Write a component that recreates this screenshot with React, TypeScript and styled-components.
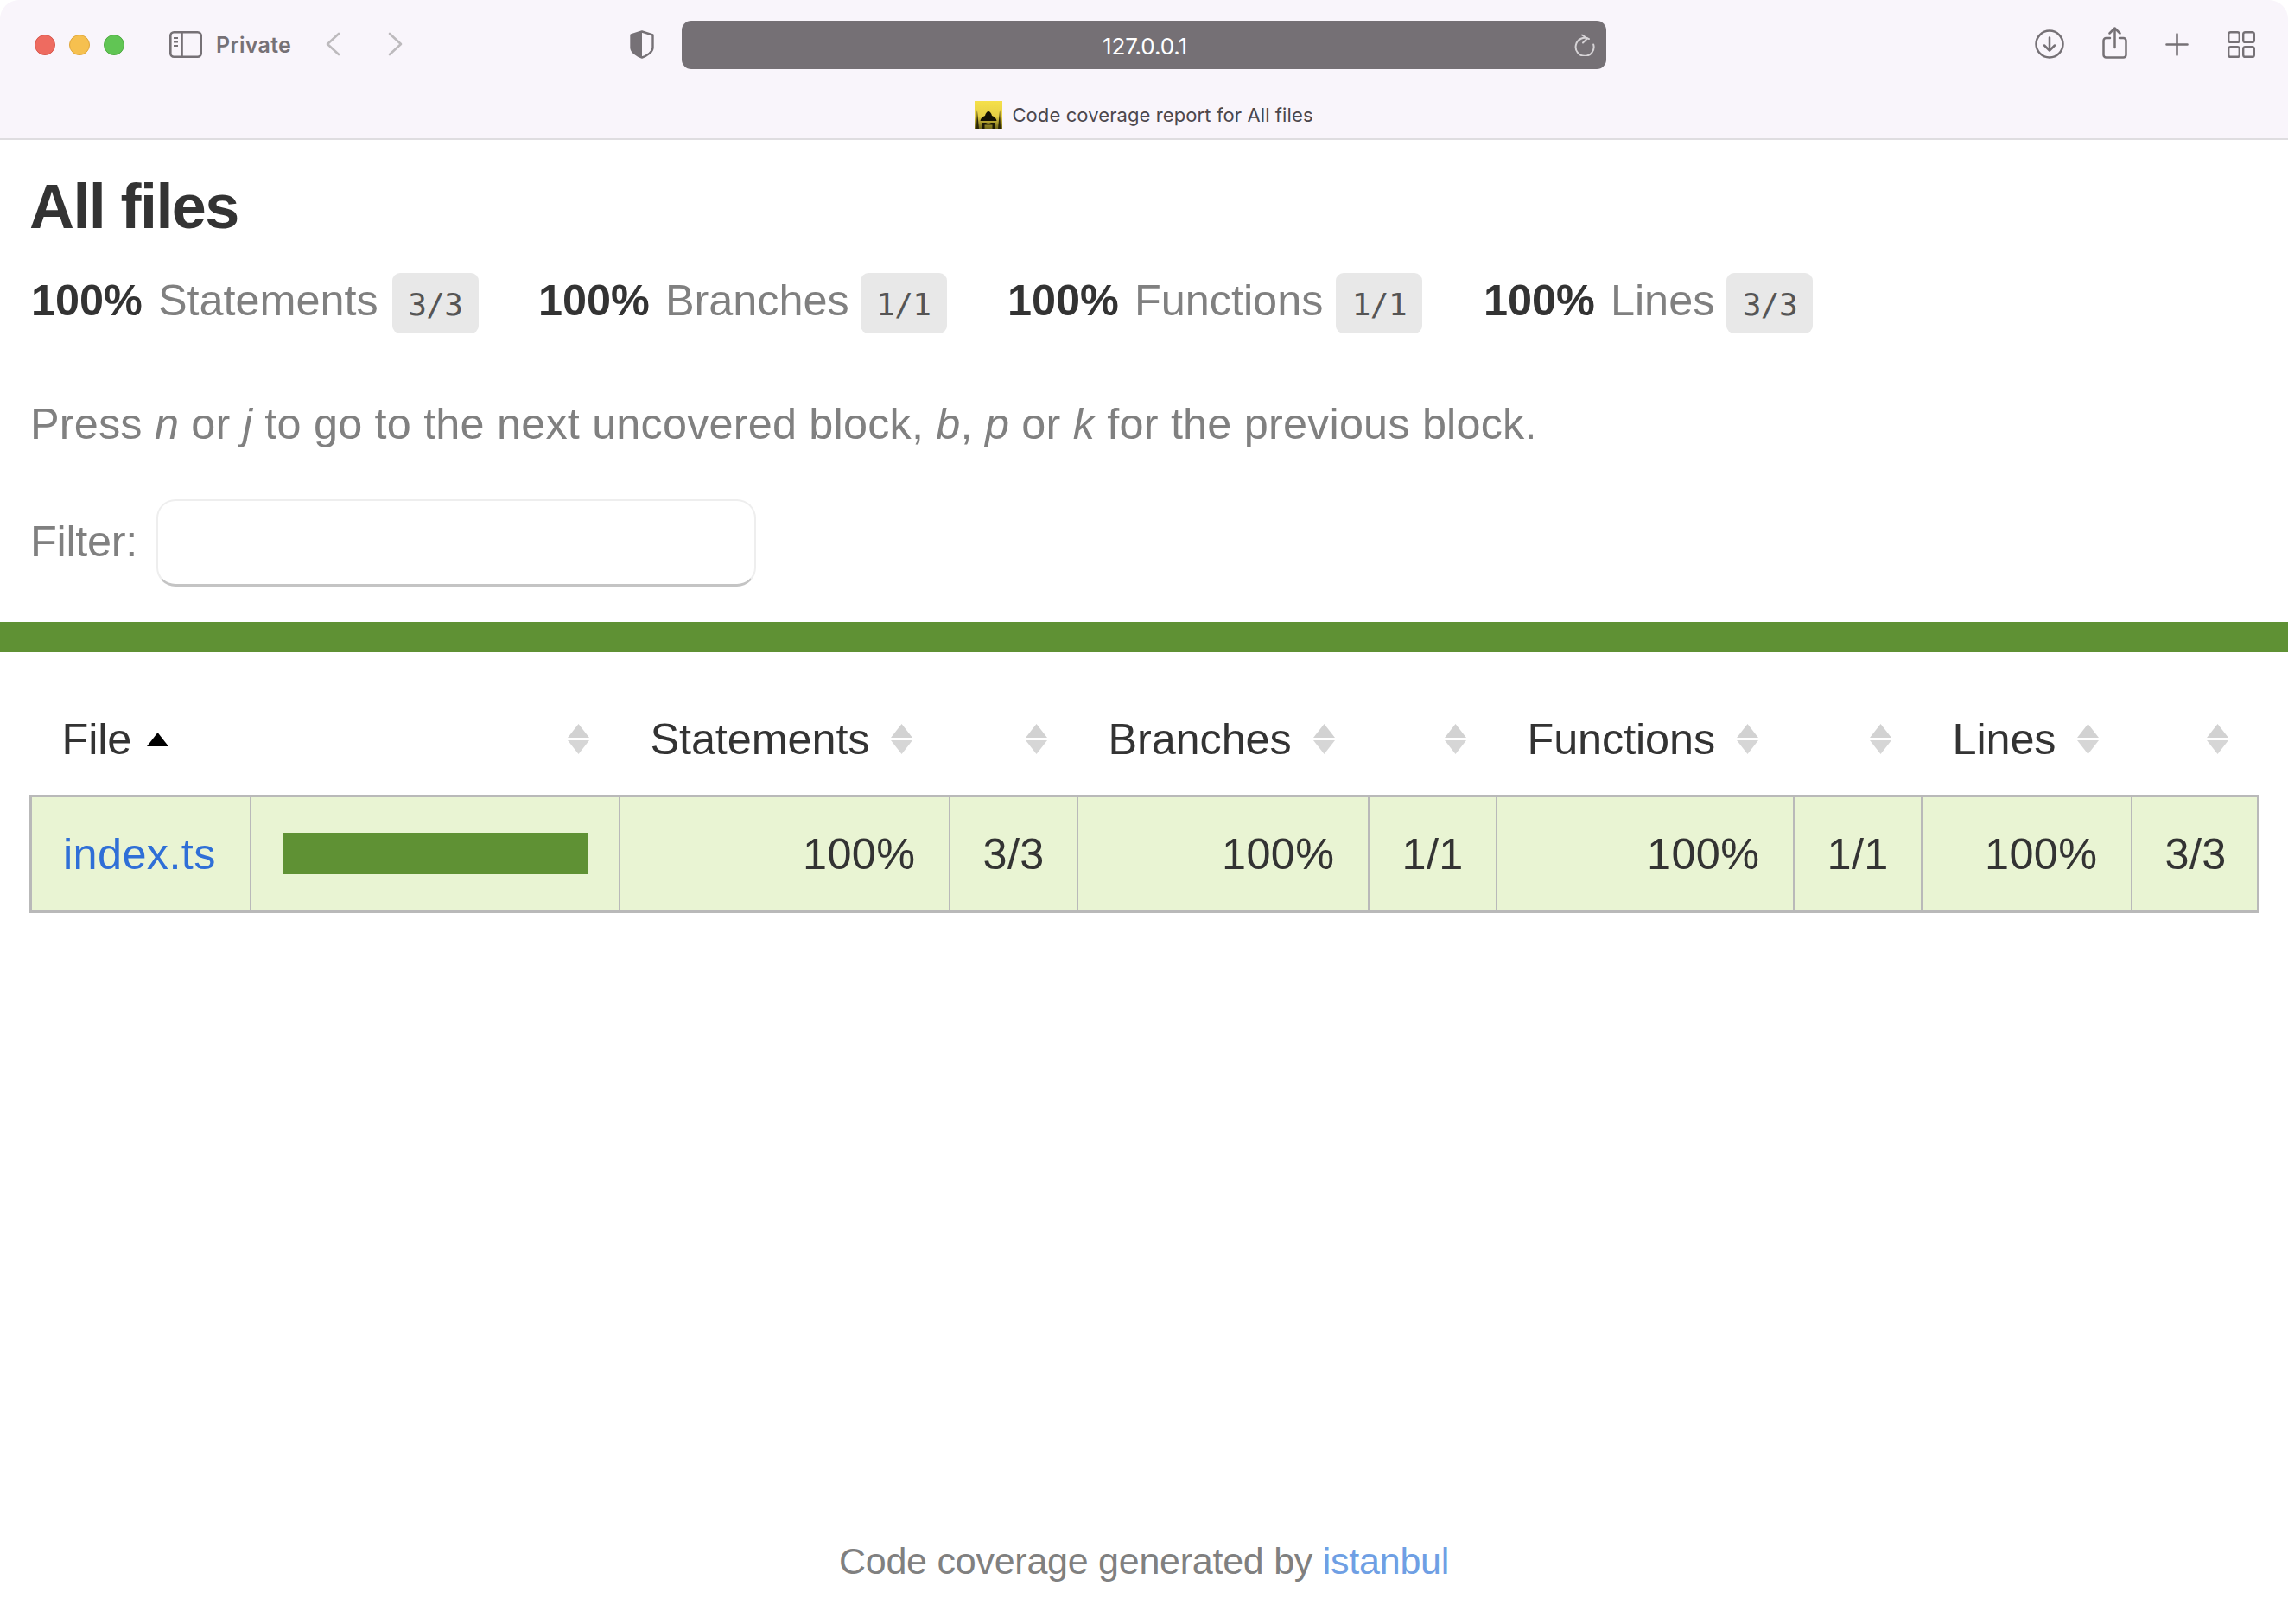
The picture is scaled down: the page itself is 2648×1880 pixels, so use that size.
import React from "react";
import styled, { createGlobalStyle } from "styled-components";

const Global = createGlobalStyle`
  html, body { margin: 0; padding: 0; background: #fff; }
  body { font-family: "Liberation Sans", Arial, sans-serif; color: #333; overflow: hidden; }
`;
const Page = styled.div`
  width: 2648px; height: 1880px; display: flex; flex-direction: column; background: #fff;
`;
const Chrome = styled.header`
  height: 160px; box-sizing: content-box; background: #f9f5fb;
  border-bottom: 2px solid #dfdde0; border-radius: 22px 22px 0 0;
  display: flex; flex-direction: column; flex: none;
`;
const Toolbar = styled.div`
  display: flex; align-items: center; height: 56px; margin-top: 24px; padding-left: 40px;
`;
const Lights = styled.div`display: flex; gap: 16px;`;
const Light = styled.span<{ $bg: string; $edge: string }>`
  width: 24px; height: 24px; border-radius: 50%; box-sizing: border-box;
  background: ${p => p.$bg}; border: 1px solid ${p => p.$edge};
`;
const Slot = styled.span<{ $ml: number; $w: number; $h: number; $mt?: number }>`
  display: flex; flex: none; margin-left: ${p => p.$ml}px; margin-top: ${p => p.$mt ?? -2}px;
  width: ${p => p.$w}px; height: ${p => p.$h}px;
  svg { display: block; width: 100%; height: 100%; }
`;
const Private = styled.span`
  margin-left: 16px; width: 87px; flex: none; font: 600 25px "Inter", sans-serif; color: #767176; letter-spacing: 0.3px;
  white-space: nowrap;
`;
const UrlBar = styled.div`
  margin-left: 32px; width: 1070px; height: 56px; flex: none; border-radius: 11px; background: #757075;
  display: flex; align-items: center; justify-content: center; position: relative;
`;
const UrlText = styled.span`
  font: 400 26px "Inter", sans-serif; color: #fff; letter-spacing: -0.1px; padding-top: 3px; margin-left: 2px;
`;
const Reload = styled.span`
  position: absolute; right: 12px; top: 15px; width: 26px; height: 26px;
  svg { display: block; width: 100%; height: 100%; }
`;
const TabRow = styled.div`
  display: flex; align-items: center; justify-content: center; gap: 11px; height: 32px; margin-top: 37px;
`;
const TabTitle = styled.span`
  font: 400 22px "Inter", sans-serif; color: #4c474d; letter-spacing: 0.1px; white-space: nowrap;
`;
const Body = styled.main`padding: 0 34px; flex: none;`;
const Title = styled.h1`
  margin: 31px 0 0 0; font-size: 72px; line-height: 92px; font-weight: 700; letter-spacing: -1.6px; color: #333;
`;
const Stats = styled.div`display: flex; margin-top: 31px; padding-left: 2px; height: 70px; align-items: flex-start;`;
const Stat = styled.div<{ $w: number }>`
  display: flex; width: ${p => p.$w}px; flex: none; font-size: 50.4px; line-height: 64px; white-space: nowrap;
`;
const Strong = styled.strong`color: #333; font-weight: 700; margin-right: 18px; letter-spacing: 0;`;
const Quiet = styled.span`color: #808080;`;
const Badge = styled.span<{ $gap: number }>`
  margin-left: ${p => p.$gap}px; width: 100px; height: 70px; background: #e8e8e8; border-radius: 9px; flex: none;
  font: 400 36px/74px "DejaVu Sans Mono", monospace; text-align: center; color: #555; letter-spacing: -0.6px;
`;
const Hint = styled.p`
  margin: 76px 0 0 1px; font-size: 50.4px; line-height: 58px; color: #808080; white-space: nowrap; letter-spacing: 0.19px;
  em { font-style: italic; }
`;
const FilterRow = styled.div`display: flex; align-items: center; margin: 58px 0 0 1px;`;
const FilterLabel = styled.label`font-size: 50.4px; color: #808080; letter-spacing: -0.3px; width: 146px; flex: none; padding-bottom: 4px;`;
const FilterInput = styled.div`
  width: 694px; height: 101px; box-sizing: border-box; background: #fff; border-radius: 22px;
  border: 2px solid #eeeeee; border-bottom: 3px solid #c4c4c4;
`;
const StatusBar = styled.div`height: 35px; background: #5f9134; margin-top: 41px; flex: none;`;
const TableWrap = styled.div`padding: 0 34px; flex: none;`;
const Table = styled.table`
  table-layout: fixed; border-collapse: collapse; width: 2578px; margin-top: 49px;
`;
const Th = styled.th`
  height: 117px; padding: 0 34px 12px 36px; box-sizing: border-box; font-size: 50.4px; font-weight: 400; color: #333;
  text-align: left; white-space: nowrap; letter-spacing: -0.1px;
`;
const HeadInner = styled.span<{ $end?: boolean }>`
  display: flex; align-items: center; gap: 24px; ${p => (p.$end ? "justify-content: flex-end;" : "")}
`;
const Arrow = styled.svg`flex: none; display: block; width: 27px; height: 35px;`;
const ActiveArrow = styled.svg`flex: none; display: block; width: 25px; height: 16px; margin-left: -6px;`;
const Row = styled.tr`background: #e9f4d3;`;
const cellEdges = `
  border: 2px solid #b9b9b9; border-top-width: 3px; border-bottom-width: 3px;
  &:first-child { border-left-width: 3px; }
  &:last-child { border-right-width: 3px; }
`;
const Td = styled.td<{ $right?: boolean }>`
  height: 134px; padding: 0 38px; box-sizing: border-box; ${cellEdges}
  font-size: 50.4px; color: #333; text-align: ${p => (p.$right ? "right" : "left")}; white-space: nowrap; letter-spacing: 0.4px;
`;
const FileLink = styled.a`color: #2f6fd7; text-decoration: none;`;
const NameCell = styled(Td)`padding-left: 36px;`;
const BarCell = styled.td`
  height: 134px; padding: 0 36px; box-sizing: border-box; ${cellEdges}
`;
const Bar = styled.div`height: 48px; background: #5f9134;`;
const Footer = styled.footer`
  margin-top: auto; padding-bottom: 51px; text-align: center; font-size: 43px; line-height: 44px; color: #808080; letter-spacing: -0.25px;
`;
const FooterLink = styled.a`color: #6f9fe4; text-decoration: none;`;

const stroke = "#767176";

const Sidebar = () => (
  <svg viewBox="0 0 38 31" fill="none" stroke={stroke} strokeWidth="2.6">
    <rect x="1.3" y="1.3" width="35.4" height="28.4" rx="4" />
    <path d="M14.5 1.5V29.5" />
    <path d="M5 8h5M5 12.5h5M5 17h5" strokeWidth="1.8" />
  </svg>
);
const Chevron = ({ left }: { left?: boolean }) => (
  <svg viewBox="0 0 17 28" fill="none" stroke="#bdbabd" strokeWidth="2.6" strokeLinecap="round" strokeLinejoin="round">
    <path d={left ? "M15 2L2 14L15 26" : "M2 2L15 14L2 26"} />
  </svg>
);
const Shield = () => (
  <svg viewBox="0 0 28 33" fill="none">
    <path d="M14 1.5L26.5 5.5V20C26.5 25 20 29.5 14 31.5C8 29.5 1.5 25 1.5 20V5.5Z" stroke={stroke} strokeWidth="2.4" strokeLinejoin="round" />
    <path d="M14 1.5L1.5 5.5V20C1.5 25 8 29.5 14 31.5Z" fill={stroke} />
  </svg>
);
const ReloadIcon = () => (
  <svg viewBox="0 0 26 26" fill="none" stroke="#d6d3d6" strokeWidth="2" strokeLinecap="round" strokeLinejoin="round">
    <path d="M20 7.5A10.5 10.5 0 1 0 23.5 15" transform="rotate(-14 13 15)" />
    <path d="M10 1.5L16 5.5L11 10.5" />
  </svg>
);
const Download = () => (
  <svg viewBox="0 0 34 34" fill="none" stroke={stroke} strokeWidth="2.5" strokeLinecap="round" strokeLinejoin="round">
    <circle cx="17" cy="17" r="15.5" />
    <path d="M17 9.5V24M11 18.5L17 24.5L23 18.5" />
  </svg>
);
const Share = () => (
  <svg viewBox="0 0 29 37" fill="none" stroke={stroke} strokeWidth="2.5" strokeLinecap="round" strokeLinejoin="round">
    <path d="M9 13H4.5A3 3 0 0 0 1.5 16V32.5A3 3 0 0 0 4.5 35.5H24.5A3 3 0 0 0 27.5 32.5V16A3 3 0 0 0 24.5 13H20" />
    <path d="M14.5 24V2M8.5 7.5L14.5 1.5L20.5 7.5" />
  </svg>
);
const Plus = () => (
  <svg viewBox="0 0 27 27" fill="none" stroke={stroke} strokeWidth="2.6" strokeLinecap="round">
    <path d="M13.5 1.5V25.5M1.5 13.5H25.5" />
  </svg>
);
const Tabs = () => (
  <svg viewBox="0 0 32 31" fill="none" stroke={stroke} strokeWidth="2.4">
    <rect x="1.2" y="1.2" width="12.6" height="11.6" rx="2.4" />
    <rect x="18.2" y="1.2" width="12.6" height="11.6" rx="2.4" />
    <rect x="1.2" y="18.2" width="12.6" height="11.6" rx="2.4" />
    <rect x="18.2" y="18.2" width="12.6" height="11.6" rx="2.4" />
  </svg>
);
const FaviconSvg = styled.svg`display: block; width: 32px; height: 32px; flex: none;`;
const Favicon = () => (
  <FaviconSvg viewBox="0 0 32 32">
    <defs>
      <linearGradient id="fav" x1="0" y1="0" x2="0" y2="1">
        <stop offset="0" stopColor="#f5e04a" />
        <stop offset="0.55" stopColor="#e6cf44" />
        <stop offset="1" stopColor="#6f6618" />
      </linearGradient>
    </defs>
    <rect width="32" height="32" fill="url(#fav)" />
    <path d="M2 32L2.8 10L5 32Z" fill="#2b2608" />
    <path d="M30 32L29.2 10L27 32Z" fill="#2b2608" />
    <path d="M12 17C12.5 14 14.5 12 16 12C17.5 12 19.5 14 20 17C23 18 25 20 25.5 23H6.5C7 20 9 18 12 17Z" fill="#151204" />
    <path d="M8 32V25H13C14 26 18 26 19 25H24V32H20.5V27.5H11.5V32Z" fill="#1d1a06" />
  </FaviconSvg>
);
const SortBoth = () => (
  <Arrow viewBox="0 0 27 35">
    <path d="M13.5 0L26 16H1Z" fill="#d2d2d2" />
    <path d="M13.5 35L26 19H1Z" fill="#d6d6d6" />
  </Arrow>
);
const SortAsc = () => (
  <ActiveArrow viewBox="0 0 25 16">
    <path d="M12.5 0L25 16H0Z" fill="#000" />
  </ActiveArrow>
);

const stats = [
  { pct: "100%", label: "Statements", frac: "3/3", w: 587, gap: 16 },
  { pct: "100%", label: "Branches", frac: "1/1", w: 543, gap: 13 },
  { pct: "100%", label: "Functions", frac: "1/1", w: 551, gap: 15 },
  { pct: "100%", label: "Lines", frac: "3/3", w: 400, gap: 14 },
];

const widths = [254, 427, 382, 148, 337, 148, 344, 148, 243, 147];
const heads: Array<[string, string]> = [
  ["Statements", "3/3"],
  ["Branches", "1/1"],
  ["Functions", "1/1"],
  ["Lines", "3/3"],
];

export default function App() {
  return (
    <Page>
      <Global />
      <Chrome>
        <Toolbar>
          <Lights>
            <Light $bg="#ee6b60" $edge="#d8574c" />
            <Light $bg="#f6c04f" $edge="#dfa63a" />
            <Light $bg="#61c554" $edge="#50ab43" />
          </Lights>
          <Slot $ml={52} $w={38} $h={31}><Sidebar /></Slot>
          <Private>Private</Private>
          <Slot $ml={40} $w={17} $h={28}><Chevron left /></Slot>
          <Slot $ml={55} $w={17} $h={28}><Chevron /></Slot>
          <Slot $ml={263} $w={28} $h={33}><Shield /></Slot>
          <UrlBar>
            <UrlText>127.0.0.1</UrlText>
            <Reload><ReloadIcon /></Reload>
          </UrlBar>
          <Slot $ml={496} $w={34} $h={34}><Download /></Slot>
          <Slot $ml={44} $w={29} $h={37} $mt={-5}><Share /></Slot>
          <Slot $ml={44} $w={27} $h={27}><Plus /></Slot>
          <Slot $ml={45} $w={32} $h={31}><Tabs /></Slot>
        </Toolbar>
        <TabRow>
          <Favicon />
          <TabTitle>Code coverage report for All files</TabTitle>
        </TabRow>
      </Chrome>
      <Body>
        <Title>All files</Title>
        <Stats>
          {stats.map(s => (
            <Stat key={s.label} $w={s.w}>
              <Strong>{s.pct}</Strong>
              <Quiet>{s.label}</Quiet>
              <Badge $gap={s.gap}>{s.frac}</Badge>
            </Stat>
          ))}
        </Stats>
        <Hint>
          Press <em>n</em> or <em>j</em> to go to the next uncovered block, <em>b</em>, <em>p</em> or <em>k</em> for the previous block.
        </Hint>
        <FilterRow>
          <FilterLabel>Filter:</FilterLabel>
          <FilterInput />
        </FilterRow>
      </Body>
      <StatusBar />
      <TableWrap>
        <Table>
          <colgroup>
            {widths.map((w, i) => <col key={i} style={{ width: w }} />)}
          </colgroup>
          <thead>
            <tr>
              <Th><HeadInner>File <SortAsc /></HeadInner></Th>
              <Th><HeadInner $end><SortBoth /></HeadInner></Th>
              {heads.map(([h]) => (
                <React.Fragment key={h}>
                  <Th><HeadInner>{h} <SortBoth /></HeadInner></Th>
                  <Th><HeadInner $end><SortBoth /></HeadInner></Th>
                </React.Fragment>
              ))}
            </tr>
          </thead>
          <tbody>
            <Row>
              <NameCell><FileLink href="#">index.ts</FileLink></NameCell>
              <BarCell><Bar /></BarCell>
              {heads.map(([h, f]) => (
                <React.Fragment key={h}>
                  <Td $right>100%</Td>
                  <Td>{f}</Td>
                </React.Fragment>
              ))}
            </Row>
          </tbody>
        </Table>
      </TableWrap>
      <Footer>Code coverage generated by <FooterLink href="#">istanbul</FooterLink></Footer>
    </Page>
  );
}
